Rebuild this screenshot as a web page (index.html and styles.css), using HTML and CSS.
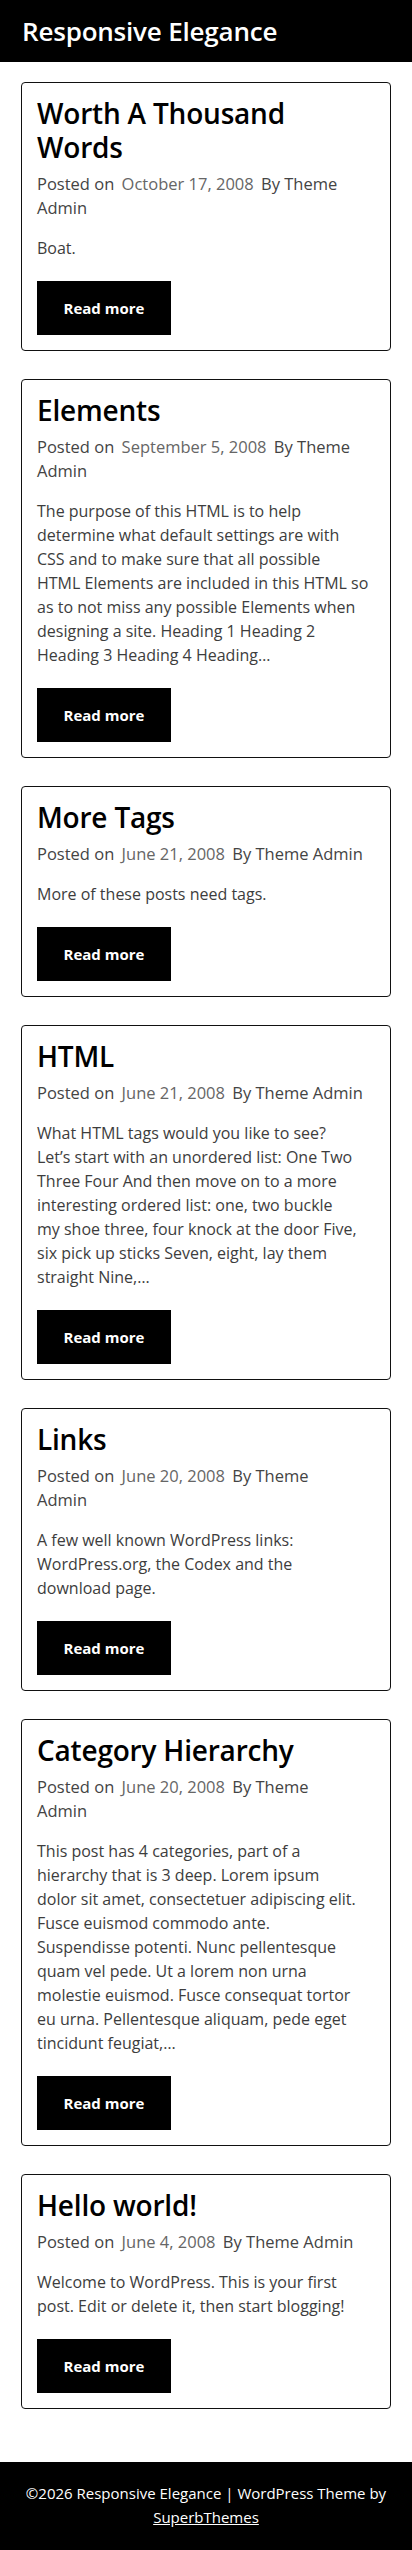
FILE: index.html
```html
<!DOCTYPE html>
<html lang="en">
<head>
<meta charset="utf-8">
<meta name="viewport" content="width=device-width, initial-scale=1">
<title>Responsive Elegance</title>
<link rel="stylesheet" href="styles.css">
</head>
<body>
<header class="site-header">
  <a class="site-title" href="#">Responsive Elegance</a>
</header>
<main class="posts">
  <article class="post-card">
    <h2 class="post-title">Worth A Thousand Words</h2>
    <div class="post-meta"><span class="meta-label">Posted on</span> <span class="meta-date">October 17, 2008</span> <span class="meta-author">By Theme Admin</span></div>
    <p class="post-excerpt">Boat.</p>
    <a class="read-more" href="#">Read more</a>
  </article>
  <article class="post-card">
    <h2 class="post-title">Elements</h2>
    <div class="post-meta"><span class="meta-label">Posted on</span> <span class="meta-date">September 5, 2008</span> <span class="meta-author">By Theme Admin</span></div>
    <p class="post-excerpt">The purpose of this HTML is to help<br>determine what default settings are with<br>CSS and to make sure that all possible<br>HTML Elements are included in this HTML so<br>as to not miss any possible Elements when<br>designing a site. Heading 1 Heading 2<br>Heading 3 Heading 4 Heading&hellip;</p>
    <a class="read-more" href="#">Read more</a>
  </article>
  <article class="post-card">
    <h2 class="post-title">More Tags</h2>
    <div class="post-meta"><span class="meta-label">Posted on</span> <span class="meta-date">June 21, 2008</span> <span class="meta-author">By Theme Admin</span></div>
    <p class="post-excerpt">More of these posts need tags.</p>
    <a class="read-more" href="#">Read more</a>
  </article>
  <article class="post-card">
    <h2 class="post-title">HTML</h2>
    <div class="post-meta"><span class="meta-label">Posted on</span> <span class="meta-date">June 21, 2008</span> <span class="meta-author">By Theme Admin</span></div>
    <p class="post-excerpt">What HTML tags would you like to see?<br>Let&rsquo;s start with an unordered list: One Two<br>Three Four And then move on to a more<br>interesting ordered list: one, two buckle<br>my shoe three, four knock at the door Five,<br>six pick up sticks Seven, eight, lay them<br>straight Nine,&hellip;</p>
    <a class="read-more" href="#">Read more</a>
  </article>
  <article class="post-card">
    <h2 class="post-title">Links</h2>
    <div class="post-meta"><span class="meta-label">Posted on</span> <span class="meta-date">June 20, 2008</span> <span class="meta-author">By Theme<br>Admin</span></div>
    <p class="post-excerpt">A few well known WordPress links:<br>WordPress.org, the Codex and the<br>download page.</p>
    <a class="read-more" href="#">Read more</a>
  </article>
  <article class="post-card">
    <h2 class="post-title">Category Hierarchy</h2>
    <div class="post-meta"><span class="meta-label">Posted on</span> <span class="meta-date">June 20, 2008</span> <span class="meta-author">By Theme<br>Admin</span></div>
    <p class="post-excerpt">This post has 4 categories, part of a<br>hierarchy that is 3 deep. Lorem ipsum<br>dolor sit amet, consectetuer adipiscing elit.<br>Fusce euismod commodo ante.<br>Suspendisse potenti. Nunc pellentesque<br>quam vel pede. Ut a lorem non urna<br>molestie euismod. Fusce consequat tortor<br>eu urna. Pellentesque aliquam, pede eget<br>tincidunt feugiat,&hellip;</p>
    <a class="read-more" href="#">Read more</a>
  </article>
  <article class="post-card">
    <h2 class="post-title">Hello world!</h2>
    <div class="post-meta"><span class="meta-label">Posted on</span> <span class="meta-date">June 4, 2008</span> <span class="meta-author">By Theme Admin</span></div>
    <p class="post-excerpt">Welcome to WordPress. This is your first<br>post. Edit or delete it, then start blogging!</p>
    <a class="read-more" href="#">Read more</a>
  </article>
</main>
<footer class="site-footer">
  <p class="footer-text">&copy;2026 Responsive Elegance | WordPress Theme by <a class="footer-link" href="#">SuperbThemes</a></p>
</footer>
</body>
</html>
```
FILE: styles.css
```css
* { box-sizing: border-box; }

html, body {
  margin: 0;
  padding: 0;
  background: #fff;
}

body {
  font-family: "Open Sans", "Liberation Sans", sans-serif;
  color: #444;
  font-size: 16px;
  line-height: 24px;
}

.site-header {
  background: #000;
  height: 62px;
  display: flex;
  align-items: center;
  padding: 0 22px;
}

.site-title {
  color: #fff;
  text-decoration: none;
  font-size: 26px;
  font-weight: 600;
  line-height: 32px;
  letter-spacing: -0.2px;
}

.posts {
  display: flex;
  flex-direction: column;
  gap: 28px;
  padding: 20px 21px 53px;
}

.post-card {
  border: 1px solid #111;
  border-radius: 4px;
  padding: 13px 15px 15px;
  background: #fff;
}

.post-title {
  margin: 0 0 8px;
  font-size: 28px;
  line-height: 34px;
  font-weight: 600;
  color: #000;
  letter-spacing: -0.2px;
}

.post-meta {
  color: #555;
  font-size: 16.5px;
  line-height: 24px;
}

.meta-label,
.meta-author {
  font-weight: 500;
  color: #444;
}

.meta-date {
  color: #666;
  padding: 0 3px;
}

.post-excerpt {
  margin: 16px 0 21px;
  color: #3d3d3d;
  font-size: 16px;
  line-height: 24px;
}

.read-more {
  display: flex;
  align-items: center;
  justify-content: center;
  width: 134px;
  height: 54px;
  background: #000;
  color: #fff;
  text-decoration: none;
  font-size: 15px;
  font-weight: 700;
}

.site-footer {
  background: #000;
  color: #fff;
  padding: 19px 16px 21px;
  text-align: center;
}

.footer-text {
  margin: 0;
  font-size: 15px;
  line-height: 24px;
}

.footer-link {
  color: #fff;
  text-decoration: underline;
}
```
